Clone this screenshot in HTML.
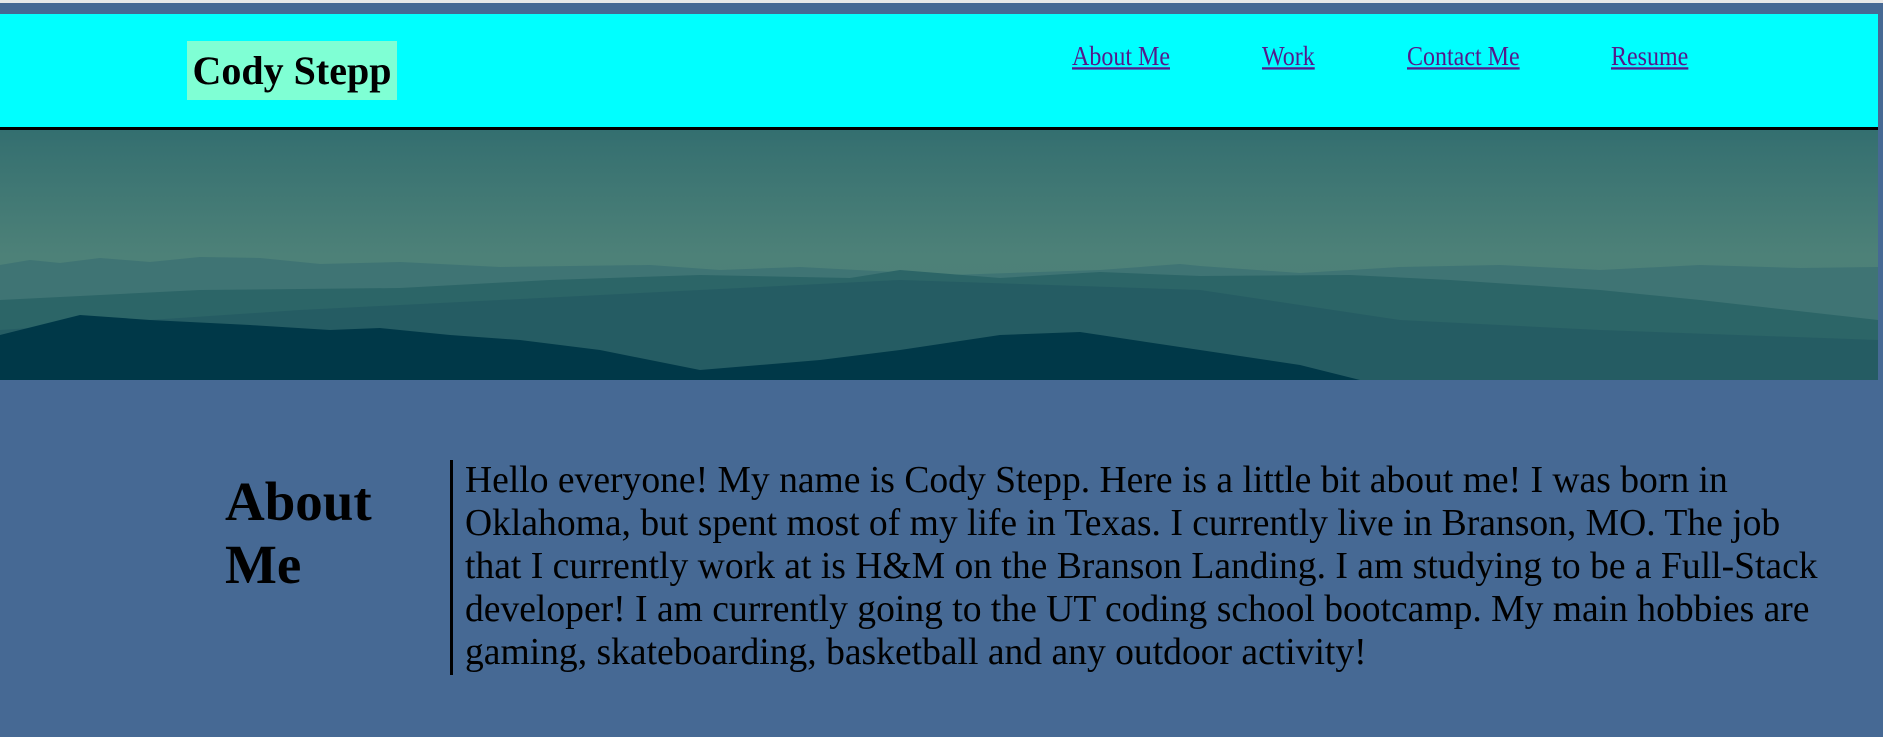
<!DOCTYPE html>
<html><head><meta charset="utf-8"><style>
html,body{margin:0;padding:0}
body{width:1883px;height:737px;background:#466994;font-family:"Liberation Serif",serif;overflow:hidden;position:relative}
.top{position:absolute;left:0;top:0;width:1883px;height:3px;background:#e8e8e8}
header{position:absolute;left:0;top:14px;width:1878px;height:113px;background:#00ffff;border-bottom:3px solid #000}
.logo{position:absolute;left:187px;top:27px;width:210px;height:59px;background:#7fffd4;font-weight:bold;font-size:40px;line-height:59px;text-align:center;color:#000}
nav a{position:absolute;top:32px;font-size:24px;color:#551a8b;text-decoration:underline;display:inline-block;transform:scaleY(1.15);transform-origin:left bottom}
.hero{position:absolute;left:0;top:130px;width:1878px;height:250px}
h2{position:absolute;left:225px;top:470px;margin:0;font-size:55px;line-height:63px;font-weight:bold;width:200px}
.bar{position:absolute;left:450px;top:460px;width:3px;height:215px;background:#000}
.txt{position:absolute;left:465px;top:459px;width:1380px;font-size:37.6px;line-height:43px;color:#000}
</style></head><body>
<div class="top"></div>
<header>
<div class="logo">Cody Stepp</div>
<nav>
<a style="left:1072px">About Me</a>
<a style="left:1262px">Work</a>
<a style="left:1407px">Contact Me</a>
<a style="left:1611px">Resume</a>
</nav>
</header>
<svg class="hero" viewBox="0 0 1878 250" preserveAspectRatio="none">
<defs><linearGradient id="sky" x1="0" y1="0" x2="0" y2="1"><stop offset="0" stop-color="#346f70"/><stop offset="0.5" stop-color="#4d8178"/><stop offset="1" stop-color="#4c7d77"/></linearGradient></defs>
<rect width="1878" height="250" fill="url(#sky)"/>
<path d="M0 135 L30 130 L60 133 L100 128 L150 132 L200 127 L260 128 L320 134 L400 132 L500 137 L650 135 L720 140 L800 137 L950 145 L1100 140 L1180 134 L1200 136 L1300 143 L1400 137 L1500 135 L1600 140 L1700 135 L1800 138 L1878 137 L1878 250 L0 250Z" fill="#3f7474"/>
<path d="M0 170 L200 160 L400 158 L550 150 L700 145 L850 148 L900 140 L1000 148 L1100 142 L1200 146 L1350 145 L1450 150 L1600 160 L1700 170 L1878 190 L1878 250 L0 250Z" fill="#2c6567"/>
<path d="M0 200 L300 180 L500 170 L700 160 L900 150 L1050 155 L1200 160 L1400 190 L1600 200 L1878 210 L1878 250 L0 250Z" fill="#245b63" opacity="0.85"/>
<path d="M0 205 L80 185 L150 190 L250 195 L330 200 L380 198 L450 205 L520 210 L600 220 L700 240 L820 230 L900 220 L1000 205 L1080 202 L1120 208 L1200 220 L1300 235 L1360 250 L0 250Z" fill="#003848"/>
</svg>
<h2>About<br>Me</h2>
<div class="bar"></div>
<div class="txt">Hello everyone! My name is Cody Stepp. Here is a little bit about me! I was born in Oklahoma, but spent most of my life in Texas. I currently live in Branson, MO. The job that I currently work at is H&amp;M on the Branson Landing. I am studying to be a Full-Stack developer! I am currently going to the UT coding school bootcamp. My main hobbies are gaming, skateboarding, basketball and any outdoor activity!</div>
</body></html>
